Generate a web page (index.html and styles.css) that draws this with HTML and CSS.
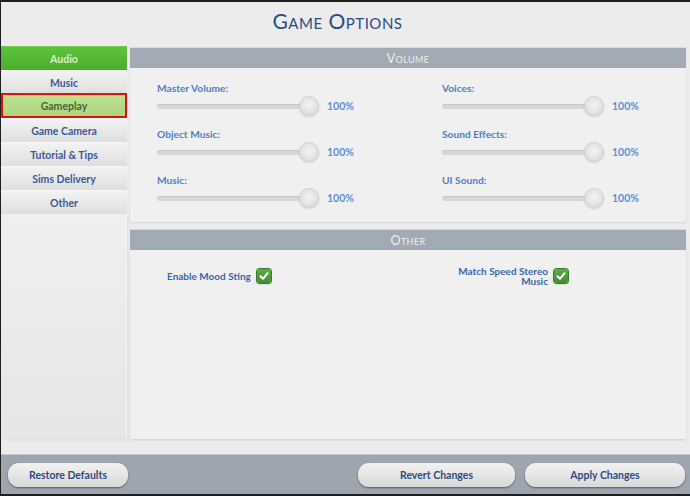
FILE: index.html
```html
<!DOCTYPE html>
<html lang="en">
<head>
    <meta charset="UTF-8">
    <meta name="viewport" content="width=device-width, initial-scale=1.0">
    <title>Game Options</title>
    <link rel="stylesheet" href="styles.css">
</head>
<body>
    <div class="screen">
        <header class="title-bar">
            <h1>Game Options</h1>
        </header>

        <div class="main">
            <nav class="sidebar">
                <div class="tab active">Audio</div>
                <div class="tab">Music</div>
                <div class="tab selected">Gameplay</div>
                <div class="tab">Game Camera</div>
                <div class="tab">Tutorial &amp; Tips</div>
                <div class="tab">Sims Delivery</div>
                <div class="tab">Other</div>
                <div class="sidebar-fill"></div>
            </nav>

            <section class="content">
                <div class="section-head">Volume</div>
                <div class="volume-grid">
                    <div class="setting">
                        <div class="label">Master Volume:</div>
                        <div class="slider-row">
                            <div class="track"><span class="knob"></span></div>
                            <span class="pct">100%</span>
                        </div>
                    </div>
                    <div class="setting">
                        <div class="label">Voices:</div>
                        <div class="slider-row">
                            <div class="track"><span class="knob"></span></div>
                            <span class="pct">100%</span>
                        </div>
                    </div>
                    <div class="setting">
                        <div class="label">Object Music:</div>
                        <div class="slider-row">
                            <div class="track"><span class="knob"></span></div>
                            <span class="pct">100%</span>
                        </div>
                    </div>
                    <div class="setting">
                        <div class="label">Sound Effects:</div>
                        <div class="slider-row">
                            <div class="track"><span class="knob"></span></div>
                            <span class="pct">100%</span>
                        </div>
                    </div>
                    <div class="setting">
                        <div class="label">Music:</div>
                        <div class="slider-row">
                            <div class="track"><span class="knob"></span></div>
                            <span class="pct">100%</span>
                        </div>
                    </div>
                    <div class="setting">
                        <div class="label">UI Sound:</div>
                        <div class="slider-row">
                            <div class="track"><span class="knob"></span></div>
                            <span class="pct">100%</span>
                        </div>
                    </div>
                </div>

                <div class="section-head other-head">Other</div>
                <div class="other-body">
                    <div class="toggle">
                        <span class="toggle-text">Enable Mood Sting</span>
                        <span class="check">
                            <svg viewBox="0 0 14 14" width="14" height="14"><path d="M3.5 7.2 L6 9.8 L10.6 4.2" fill="none" stroke="#fff" stroke-width="2" stroke-linecap="round" stroke-linejoin="round"/></svg>
                        </span>
                    </div>
                    <div class="toggle">
                        <span class="toggle-text wrap">Match Speed Stereo Music</span>
                        <span class="check">
                            <svg viewBox="0 0 14 14" width="14" height="14"><path d="M3.5 7.2 L6 9.8 L10.6 4.2" fill="none" stroke="#fff" stroke-width="2" stroke-linecap="round" stroke-linejoin="round"/></svg>
                        </span>
                    </div>
                </div>
            </section>
        </div>

        <footer class="footer">
            <button class="btn restore">Restore Defaults</button>
            <div class="spacer"></div>
            <button class="btn revert">Revert Changes</button>
            <button class="btn apply">Apply Changes</button>
        </footer>
    </div>
</body>
</html>
```

FILE: styles.css
```css
body {
    margin: 0;
    background: #ececec;
    font-family: Lato, "Open Sans", sans-serif;
}

.screen {
    height: 496px;
    box-sizing: border-box;
    border-top: 2px solid #1e1e1e;
    border-left: 1px solid #1e1e1e;
    border-bottom: 2px solid #1e1e1e;
    background: #ececec;
    display: flex;
    flex-direction: column;
    overflow: hidden;
}

.title-bar {
    height: 44px;
    box-sizing: border-box;
    display: flex;
    align-items: center;
    justify-content: center;
    padding: 0 16px 8px 0;
}

.title-bar h1 {
    margin: 0;
    font-size: 21px;
    font-weight: 400;
    font-variant: small-caps;
    letter-spacing: 0.5px;
    color: #2b4a86;
    line-height: 1;
}

.main {
    flex: 1;
    display: flex;
    gap: 3px;
    padding-right: 4px;
    padding-bottom: 15px;
}

/* left column of tabs */
.sidebar {
    width: 126px;
    display: flex;
    flex-direction: column;
}

.tab {
    height: 24px;
    display: flex;
    align-items: center;
    justify-content: center;
    font-size: 10.5px;
    font-weight: 700;
    color: #3b5a98;
    background: linear-gradient(#f3f3f3, #dedede);
    border-top: 1px solid #f7f7f7;
    box-sizing: border-box;
}

.tab.active {
    background: linear-gradient(#5cc23c, #4cae2e);
    color: #d8f2c8;
    border-top-color: #6acc4a;
}

.tab.selected {
    background: linear-gradient(#bde393, #acd47e);
    color: #3f6a34;
    border: 2px solid #e01010;
    margin-top: -1px;
    height: 25px;
}

.sidebar-fill {
    flex: 1;
    background: linear-gradient(#efefef, #e6e6e6);
    border-right: 1px solid #f6f6f6;
    box-shadow: 1px 1px 2px rgba(0, 0, 0, 0.08);
}

/* right panel */
.content {
    flex: 1;
    margin-top: 1px;
    display: flex;
    flex-direction: column;
}

.section-head {
    height: 20px;
    background: #a2aab4;
    color: #eef0f3;
    font-size: 12.5px;
    font-variant: small-caps;
    letter-spacing: 0.4px;
    display: flex;
    align-items: center;
    justify-content: center;
    border-top: 1px solid #d6d9dd;
}

.volume-grid {
    height: 154px;
    box-sizing: border-box;
    background: #f0f0f0;
    display: grid;
    grid-template-columns: 285px auto;
    row-gap: 10px;
    align-content: start;
    padding: 13px 0 0 27px;
    box-shadow: 0 1px 2px rgba(0, 0, 0, 0.1);
}

.label {
    height: 14px;
    line-height: 14px;
    font-size: 10.2px;
    font-weight: 700;
    color: #4e7ec4;
}

.slider-row {
    height: 22px;
    display: flex;
    align-items: center;
    gap: 8px;
}

.track {
    position: relative;
    width: 162px;
    height: 5px;
    border-radius: 3px;
    background: #d7d7d7;
    box-shadow: inset 0 1px 1px rgba(0, 0, 0, 0.08);
}

.knob {
    position: absolute;
    right: 0;
    top: -8px;
    width: 20px;
    height: 20px;
    box-sizing: border-box;
    border-radius: 50%;
    border: 1px solid #d2d2d2;
    background: radial-gradient(circle at 50% 45%, #f4f4f4 0, #e4e4e4 55%, #cfcfcf 100%);
    box-shadow: 0 1px 2px rgba(0, 0, 0, 0.15);
}

.pct {
    font-size: 10.5px;
    font-weight: 700;
    color: #5d8fd4;
}

.other-head {
    margin-top: 7px;
}

.other-body {
    flex: 1;
    background: #f0f0f0;
    display: grid;
    grid-template-columns: 285px auto;
    align-content: start;
    padding: 15px 0 0 37px;
    box-shadow: 0 1px 2px rgba(0, 0, 0, 0.12);
}

.toggle {
    height: 22px;
    display: flex;
    align-items: center;
    gap: 6px;
}

.toggle-text {
    font-size: 10px;
    font-weight: 700;
    color: #3c64aa;
    line-height: 10px;
}

.toggle-text.wrap {
    width: 96px;
    text-align: right;
}

.check {
    width: 14px;
    height: 14px;
    border-radius: 3px;
    background: linear-gradient(#5aae45, #3e8e2e);
    box-shadow: 0 0 0 1px #3a7a2c, 0 1px 2px rgba(0, 0, 0, 0.3);
    display: flex;
}

/* bottom button bar */
.footer {
    height: 38px;
    background: #9ea5ae;
    border-top: 1px solid #c8ccd1;
    display: flex;
    align-items: center;
    padding: 1px 5px 0 7px;
    gap: 10px;
}

.spacer {
    flex: 1;
}

.btn {
    height: 24px;
    border: none;
    border-radius: 11px;
    background: linear-gradient(#f2f2f2, #d9d9d9);
    box-shadow: 0 1px 2px rgba(0, 0, 0, 0.45);
    font-family: Lato, "Open Sans", sans-serif;
    font-size: 10.5px;
    font-weight: 700;
    color: #2d4b80;
    padding: 0;
}

.btn.restore {
    width: 120px;
}

.btn.revert {
    width: 157px;
}

.btn.apply {
    width: 160px;
}
```
